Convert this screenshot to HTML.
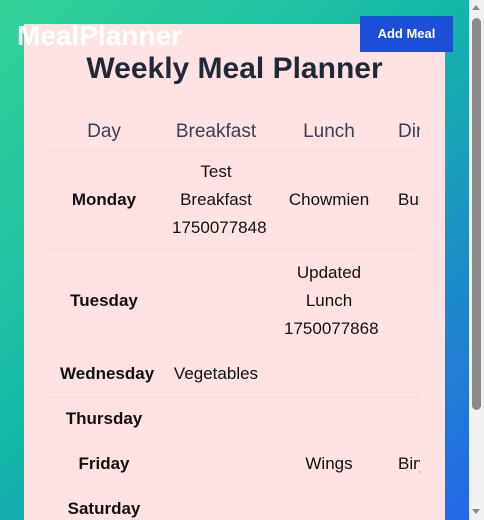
<!DOCTYPE html>
<html><head><meta charset="utf-8"><style>
*{box-sizing:border-box;margin:0;padding:0}
html,body{width:484px;height:520px;overflow:hidden}
body{font-family:"Liberation Sans",sans-serif;background:linear-gradient(135deg,#34d399 0%,#14b8a6 45%,#2563eb 100%);position:relative}
.sb{position:absolute;left:469px;top:0;width:15px;height:520px;background:#f1f1f1}
.thumb{position:absolute;left:472px;top:18px;width:9px;height:392px;background:#8a8a8a;border-radius:5px}
.au{position:absolute;left:472px;top:5px;width:0;height:0;border-left:4px solid transparent;border-right:4px solid transparent;border-bottom:5px solid #8a8a8a}
.ad{position:absolute;left:472px;top:509px;width:0;height:0;border-left:4px solid transparent;border-right:4px solid transparent;border-top:5px solid #8a8a8a}
.card{position:absolute;left:24px;top:24px;width:421px;height:496px;background:#ffe2e3;overflow:hidden}
.logo{position:absolute;left:17px;top:18px;color:#fff;font-weight:bold;font-size:28px;line-height:36px}
.btn{position:absolute;left:360px;top:16px;width:93px;height:36px;background:#1d4ed8;color:#fff;font-weight:bold;font-size:13px;line-height:36px;text-align:center}
h1{position:absolute;left:0;width:421px;top:26px;text-align:center;font-size:30px;line-height:38px;color:#1f2937;font-weight:bold}
.clip{position:absolute;left:24px;top:62px;width:372px;overflow:hidden}
table{border-collapse:collapse;table-layout:fixed;width:460px}
th{font-weight:normal;font-size:19px;color:#374151;height:63px;padding:30px 12px 0;line-height:24px;text-align:center;white-space:nowrap;vertical-align:middle}
td{font-size:17px;line-height:28px;padding:8px 12px;text-align:center;white-space:nowrap;color:#111;vertical-align:middle;height:45px}
tr{border-bottom:1px solid #e8e3e6}
td.d{font-weight:bold}
</style></head><body>
<div class="card">
<h1>Weekly Meal Planner</h1>
<div class="clip"><table>
<colgroup><col style="width:112px"><col style="width:112px"><col style="width:114px"><col style="width:122px"></colgroup>
<tr><th>Day</th><th>Breakfast</th><th>Lunch</th><th style="text-align:left">Dinner</th></tr>
<tr><td class="d">Monday</td><td>Test<br>Breakfast<br>1750077848</td><td>Chowmien</td><td style="text-align:left">Burger</td></tr>
<tr><td class="d">Tuesday</td><td></td><td>Updated<br>Lunch<br>1750077868</td><td></td></tr>
<tr><td class="d">Wednesday</td><td>Vegetables</td><td></td><td></td></tr>
<tr><td class="d">Thursday</td><td></td><td></td><td></td></tr>
<tr><td class="d">Friday</td><td></td><td>Wings</td><td style="text-align:left">Biryani</td></tr>
<tr><td class="d">Saturday</td><td></td><td></td><td></td></tr>
</table></div>
</div>
<div class="logo">MealPlanner</div>
<div class="btn">Add Meal</div>
<div class="sb"></div><div class="thumb"></div><div class="au"></div><div class="ad"></div>
</body></html>
